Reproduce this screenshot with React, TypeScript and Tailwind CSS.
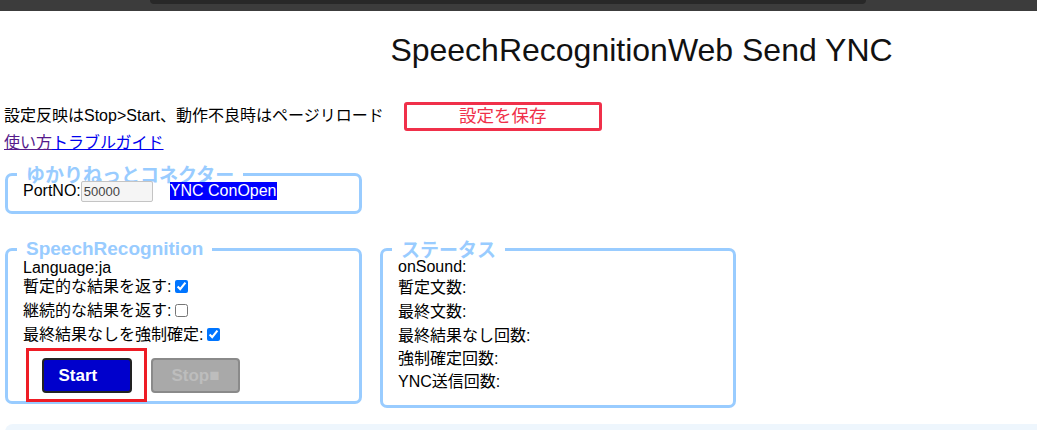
import React from 'react';

const FONT = '"Liberation Sans", "Noto Sans CJK JP", Arial, sans-serif';
const CJK_FONT = '"Noto Sans CJK JP", "Liberation Sans", sans-serif';

function Box({ legend, cjk, className, children }: { legend: string; cjk?: boolean; className: string; children: React.ReactNode }) {
  return (
    <fieldset className={`border-[3px] border-[#99ccff] rounded-[7px] ${className}`}>
      <legend
        className="-ml-[6px] px-[9px] h-[22px] text-[19px] leading-[22px] font-bold text-[#99ccff]"
        style={cjk ? { fontFamily: CJK_FONT } : undefined}
      >
        {legend}
      </legend>
      {children}
    </fieldset>
  );
}

function Check({ checked }: { checked: boolean }) {
  return (
    <input
      type="checkbox"
      defaultChecked={checked}
      className="ml-[4px] w-[13px] h-[13px] align-[-1px] accent-[#0075ff]"
    />
  );
}

export default function App() {
  return (
    <div className="w-[1037px] h-[430px] overflow-hidden bg-white text-black text-[16px]" style={{ fontFamily: FONT }}>
      {/* browser chrome strip */}
      <div className="h-[11px] bg-[#3c3c3c]">
        <div className="ml-[150px] w-[716px] h-[4px] bg-[#282828] rounded-b-[7px]" />
      </div>

      <h1 className="pl-[246px] pt-[20px] h-[90px] text-center text-[32px] leading-[38px] text-[#111]">
        SpeechRecognitionWeb Send YNC
      </h1>

      <div className="flex items-center pl-[4px] h-[30px]">
        <span className="leading-[20px]">設定反映はStop&gt;Start、動作不良時はページリロード</span>
        <button className="ml-[20px] w-[198px] h-[29px] border-[3px] border-[#f0304a] rounded-[3px] bg-white text-[#f0304a] text-[17.5px] leading-[20px]">
          設定を保存
        </button>
      </div>

      <div className="pl-[4px] mt-[1px] h-[22px] leading-[22px]">
        <a className="underline text-[#551a8b] decoration-[#551a8b]">使い方</a>
        <a className="underline text-[#0000ee]">トラブルガイド</a>
      </div>

      <Box legend="ゆかりねっとコネクター" cjk className="ml-[5px] mt-[9px] w-[357px] h-[51px] pl-[15px]">
        <div className="flex items-center h-[24px] -mt-[6px]">
          <span>PortNO:</span>
          <input
            readOnly
            value="50000"
            className="w-[72px] h-[21px] px-[2px] border border-[#c4c4c4] rounded-[2px] bg-[#f5f5f5] text-[13px] text-[#444]"
          />
          <span className="ml-[17px] bg-[#0000ff] text-white leading-[18px]">YNC ConOpen</span>
        </div>
      </Box>

      <div className="flex items-start gap-[18px] ml-[5px] mt-[24px]">
        <Box legend="SpeechRecognition" className="w-[357px] h-[166px] pl-[15px]">
          <div className="leading-[15px]">Language:ja</div>
          <div className="h-[24px] leading-[24px]">暫定的な結果を返す:<Check checked /></div>
          <div className="h-[24px] leading-[24px]">継続的な結果を返す:<Check checked={false} /></div>
          <div className="h-[24px] leading-[24px]">最終結果なしを強制確定:<Check checked /></div>
          <div className="flex items-center mt-[1px] ml-[3px]">
            <div className="border-[3px] border-[#ee1c25] w-[121px] h-[54px] flex items-center justify-center">
              <button className="w-[90px] h-[35px] mt-[1px] pl-[15px] text-left bg-[#0000cc] border-2 border-[#222] rounded-[4px] text-white font-bold text-[17px]">
                Start
              </button>
            </div>
            <button
              disabled
              className="ml-[4px] mt-[1px] w-[89px] h-[35px] bg-[#a9a9a9] border-2 border-[#8a8a8a] rounded-[4px] text-[#bdbdbd] font-bold text-[17px]"
            >
              Stop■
            </button>
          </div>
        </Box>

        <Box legend="ステータス" cjk className="w-[356px] h-[170px] pl-[15px]">
          <div className="-mt-[2px] leading-[18px]">onSound:</div>
          <div className="leading-[24px]">暫定文数:</div>
          <div className="leading-[24px]">最終文数:</div>
          <div className="leading-[23px]">最終結果なし回数:</div>
          <div className="leading-[23px]">強制確定回数:</div>
          <div className="leading-[24px]">YNC送信回数:</div>
        </Box>
      </div>

      <div className="ml-[5px] mt-[16px] h-[40px] bg-[#eef6fd] rounded-tl-[8px]" />
    </div>
  );
}
